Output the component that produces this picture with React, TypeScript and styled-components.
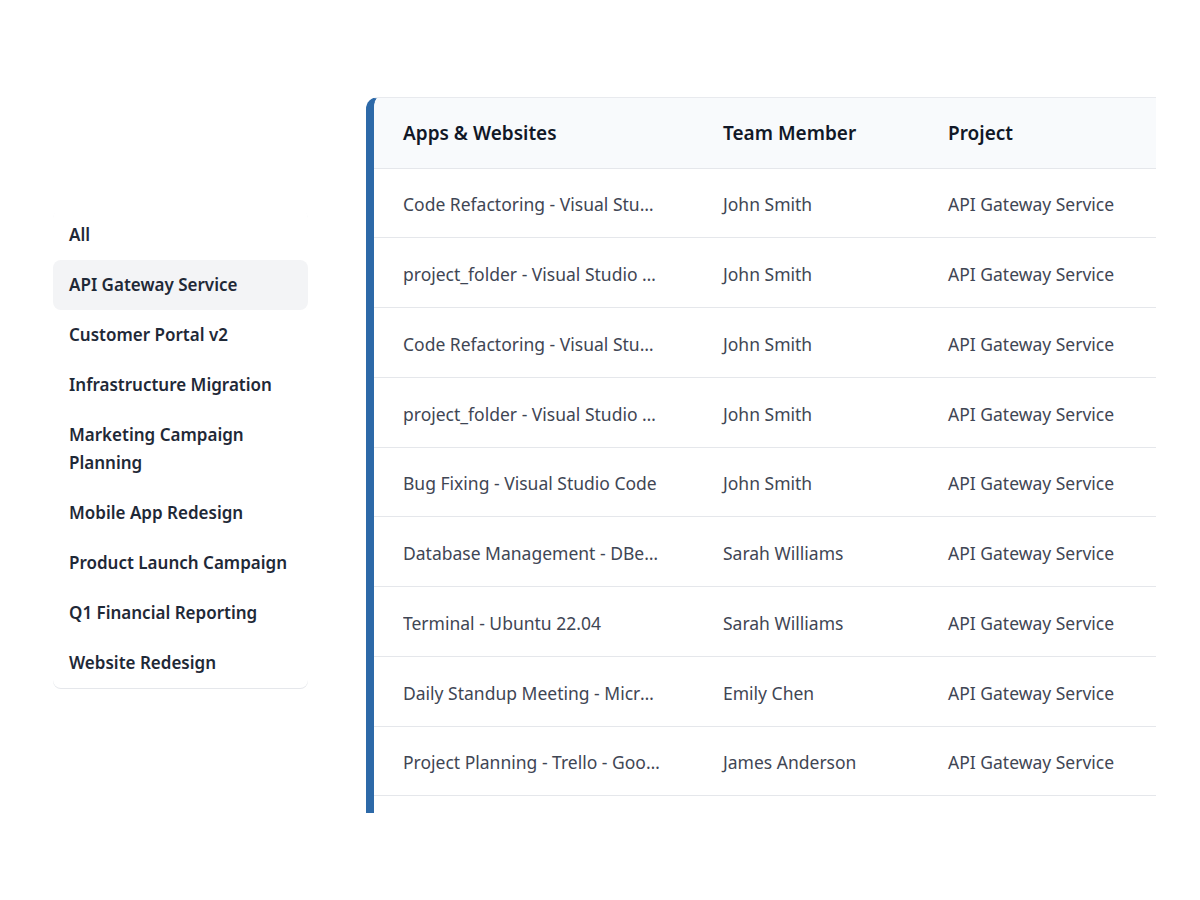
import React from "react";
import styled, { createGlobalStyle } from "styled-components";

const GlobalStyle = createGlobalStyle`
  html, body { margin: 0; padding: 0; background: #ffffff; }
  body { font-family: "Noto Sans", "Open Sans", "Liberation Sans", sans-serif; }
  * { box-sizing: border-box; }
`;

const Page = styled.div`
  display: flex;
  align-items: flex-start;
  padding: 97px 0 0 53px;
  gap: 58px;
  width: 1200px;
  height: 900px;
`;

const Sidebar = styled.ul`
  list-style: none;
  margin: 113px 0 0 0;
  padding: 0;
  width: 255px;
  border-radius: 8px;
  box-shadow: 0 1px 0 #e5e7eb;
`;

const NavItem = styled.li<{ $active?: boolean }>`
  padding: 11px 16px;
  font-size: 17px;
  line-height: 28px;
  font-weight: 600;
  color: #1f2937;
  border-radius: 8px;
  background: ${(p) => (p.$active ? "#f3f4f6" : "transparent")};
  cursor: pointer;
`;

const TableFrame = styled.div`
  width: 790px;
  height: 716px;
  overflow: hidden;
  border-left: 8px solid #2d69a8;
  border-top: 1px solid #e8eaee;
  border-top-left-radius: 12px;
`;

const Table = styled.table`
  border-collapse: collapse;
  table-layout: fixed;
  width: 900px;
`;

const HeadRow = styled.tr`
  background: #f8fafc;
  border-bottom: 1px solid #e5e7eb;
`;

const HeadCell = styled.th<{ $w: number; $first?: boolean }>`
  width: ${(p) => p.$w}px;
  height: 70px;
  padding: 0 0 0 ${(p) => (p.$first ? 29 : 0)}px;
  text-align: left;
  font-size: 19px;
  font-weight: 600;
  color: #111827;
`;

const Row = styled.tr`
  border-bottom: 1px solid #e5e7eb;
`;

const Cell = styled.td<{ $first?: boolean }>`
  height: 69.75px;
  padding: 3px 0 0 ${(p) => (p.$first ? 29 : 0)}px;
  font-size: 17.5px;
  color: #3f4654;
  white-space: nowrap;
`;

const Clip = styled.span`
  display: block;
  max-width: 260px;
  overflow: hidden;
  text-overflow: ellipsis;
  white-space: nowrap;
`;

const projects = [
  "All",
  "API Gateway Service",
  "Customer Portal v2",
  "Infrastructure Migration",
  "Marketing Campaign Planning",
  "Mobile App Redesign",
  "Product Launch Campaign",
  "Q1 Financial Reporting",
  "Website Redesign",
];

const rows: [string, string, string][] = [
  ["Code Refactoring - Visual Studio Code", "John Smith", "API Gateway Service"],
  ["project_folder - Visual Studio Code", "John Smith", "API Gateway Service"],
  ["Code Refactoring - Visual Studio Code", "John Smith", "API Gateway Service"],
  ["project_folder - Visual Studio Code", "John Smith", "API Gateway Service"],
  ["Bug Fixing - Visual Studio Code", "John Smith", "API Gateway Service"],
  ["Database Management - DBeaver", "Sarah Williams", "API Gateway Service"],
  ["Terminal - Ubuntu 22.04", "Sarah Williams", "API Gateway Service"],
  ["Daily Standup Meeting - Microsoft Teams", "Emily Chen", "API Gateway Service"],
  ["Project Planning - Trello - Google Chrome", "James Anderson", "API Gateway Service"],
  ["Sprint Review - Zoom", "James Anderson", "API Gateway Service"],
];

export default function App() {
  return (
    <>
      <GlobalStyle />
      <Page>
        <Sidebar>
          {projects.map((p) => (
            <NavItem key={p} $active={p === "API Gateway Service"}>
              {p === "Marketing Campaign Planning" ? (
                <>
                  Marketing Campaign
                  <br />
                  Planning
                </>
              ) : (
                p
              )}
            </NavItem>
          ))}
        </Sidebar>
        <TableFrame>
          <Table>
            <thead>
              <HeadRow>
                <HeadCell $w={349} $first>
                  Apps &amp; Websites
                </HeadCell>
                <HeadCell $w={225}>Team Member</HeadCell>
                <HeadCell $w={326}>Project</HeadCell>
              </HeadRow>
            </thead>
            <tbody>
              {rows.map(([app, member, project], i) => (
                <Row key={i}>
                  <Cell $first>
                    <Clip>{app}</Clip>
                  </Cell>
                  <Cell>{member}</Cell>
                  <Cell>{project}</Cell>
                </Row>
              ))}
            </tbody>
          </Table>
        </TableFrame>
      </Page>
    </>
  );
}
